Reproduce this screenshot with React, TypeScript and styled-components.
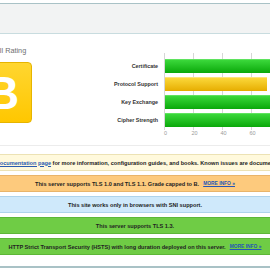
import styled, { createGlobalStyle } from "styled-components";

const GlobalStyle = createGlobalStyle`
  html, body {
    margin: 0;
    padding: 0;
    background: #ffffff;
    overflow: hidden;
  }
  body {
    font-family: "Liberation Sans", Arial, sans-serif;
  }
`;

const Page = styled.div`
  width: 270px;
  height: 270px;
  overflow: hidden;
  background: #ffffff;
`;

const TopRule = styled.div`
  margin-top: 3px;
  height: 1px;
  background: #a9c2c6;
`;

const HeaderBand = styled.div`
  height: 29px;
  background: #f2f3f3;
  border-bottom: 1px solid #c8dcdf;
`;

const Report = styled.div`
  margin: 0 -40px;
`;

const RatingSection = styled.div`
  display: flex;
  align-items: flex-start;
  padding: 12px 0 0 13px;
  height: 99px;
  border-bottom: 1px solid #ececec;
`;

const GradeColumn = styled.div`
  display: flex;
  flex-direction: column;
  width: 61px;
`;

const RatingTitle = styled.div`
  font-size: 7.3px;
  line-height: 9px;
  color: #6f6f6f;
  white-space: nowrap;
  margin-bottom: 7px;
  padding-left: 7px;
`;

const GradeBox = styled.div`
  height: 61px;
  box-sizing: border-box;
  border: 1px solid #e6b400;
  border-radius: 4px;
  background: linear-gradient(to bottom, #ffd630, #ffc700);
  display: flex;
  align-items: center;
  justify-content: center;
  color: #ffffff;
  font-weight: bold;
  font-size: 46px;
  line-height: 1;
`;

const Chart = styled.div`
  margin: 7px 0 0 46px;
  display: grid;
  grid-template-columns: 80px 146px;
  column-gap: 6px;
`;

const Labels = styled.div`
  display: flex;
  flex-direction: column;
  gap: 4px;
  padding-top: 6px;
`;

const Label = styled.div`
  height: 14px;
  display: flex;
  align-items: center;
  justify-content: flex-end;
  font-size: 5.4px;
  font-weight: bold;
  color: #333333;
  white-space: nowrap;
`;

const Plot = styled.div`
  display: flex;
  flex-direction: column;
  gap: 4px;
  padding: 6px 0 3px;
  background: repeating-linear-gradient(
    to right,
    #d6d6d6 0,
    #d6d6d6 1px,
    transparent 1px,
    transparent 29px
  );
`;

const Bar = styled.div<{ $tone: "good" | "warn" }>`
  height: 14px;
  margin-left: 1px;
  box-sizing: border-box;
  background: ${(p) =>
    p.$tone === "good"
      ? "linear-gradient(to bottom, #3bd83b, #0aa80a)"
      : "linear-gradient(to bottom, #fbd83a, #e6ad00)"};
  border-top: 1px solid
    ${(p) => (p.$tone === "good" ? "#5fe35f" : "#fde27a")};
`;

const Ticks = styled.div`
  grid-column: 2;
  display: flex;
  margin-left: -13px;
`;

const Tick = styled.div`
  width: 29px;
  flex-shrink: 0;
  text-align: center;
  font-size: 5.5px;
  line-height: 6px;
  color: #9a9a9a;
`;

const Notices = styled.div`
  display: flex;
  flex-direction: column;
  gap: 4px;
  margin-top: 8px;
`;

const tones = {
  info: { bg: "#fff9dc", border: "#ece2b4" },
  warn: { bg: "#fdca7d", border: "#e9b46a" },
  note: { bg: "#cfe9fb", border: "#aed3ec" },
  good: { bg: "#6fcc45", border: "#5db737" },
};

const Notice = styled.div<{ $tone: keyof typeof tones }>`
  height: 17px;
  box-sizing: border-box;
  background: ${(p) => tones[p.$tone].bg};
  border: 1px solid ${(p) => tones[p.$tone].border};
  display: flex;
  align-items: center;
  justify-content: center;
  font-size: 5.6px;
  font-weight: bold;
  color: #222222;
  white-space: nowrap;
`;

const DocLink = styled.a`
  color: #2a5cb0;
  text-decoration: underline;
  margin: 0 0.28em;
`;

const MoreInfo = styled.a`
  color: #2456b8;
  font-size: 4.9px;
  text-decoration: underline;
  margin-left: 4px;
`;

const BottomRule = styled.div`
  margin-top: 11px;
  height: 2px;
  background: #a9c2c6;
`;

const bars: { name: string; value: number; tone: "good" | "warn" }[] = [
  { name: "Certificate", value: 100, tone: "good" },
  { name: "Protocol Support", value: 70, tone: "warn" },
  { name: "Key Exchange", value: 90, tone: "good" },
  { name: "Cipher Strength", value: 90, tone: "good" },
];

const App = () => {
  return (
    <Page>
      <GlobalStyle />
      <TopRule />
      <HeaderBand />
      <Report>
        <RatingSection>
          <GradeColumn>
            <RatingTitle>Overall Rating</RatingTitle>
            <GradeBox>B</GradeBox>
          </GradeColumn>
          <Chart>
            <Labels>
              {bars.map((b) => (
                <Label key={b.name}>{b.name}</Label>
              ))}
            </Labels>
            <Plot>
              {bars.map((b) => (
                <Bar
                  key={b.name}
                  $tone={b.tone}
                  style={{ width: `${b.value * 1.45}px` }}
                />
              ))}
            </Plot>
            <Ticks>
              {[0, 20, 40, 60, 80, 100].map((t) => (
                <Tick key={t}>{t}</Tick>
              ))}
            </Ticks>
          </Chart>
        </RatingSection>
        <Notices>
          <Notice $tone="info">
            Visit our<DocLink href="#">documentation page</DocLink>for more
            information, configuration guides, and books. Known issues are
            documented here.
          </Notice>
          <Notice $tone="warn">
            This server supports TLS 1.0 and TLS 1.1. Grade capped to B.
            <MoreInfo href="#">MORE INFO »</MoreInfo>
          </Notice>
          <Notice $tone="note">
            This site works only in browsers with SNI support.
          </Notice>
          <Notice $tone="good">This server supports TLS 1.3.</Notice>
          <Notice $tone="good">
            HTTP Strict Transport Security (HSTS) with long duration deployed
            on this server.
            <MoreInfo href="#">MORE INFO »</MoreInfo>
          </Notice>
        </Notices>
        <BottomRule />
      </Report>
    </Page>
  );
};

export default App;
